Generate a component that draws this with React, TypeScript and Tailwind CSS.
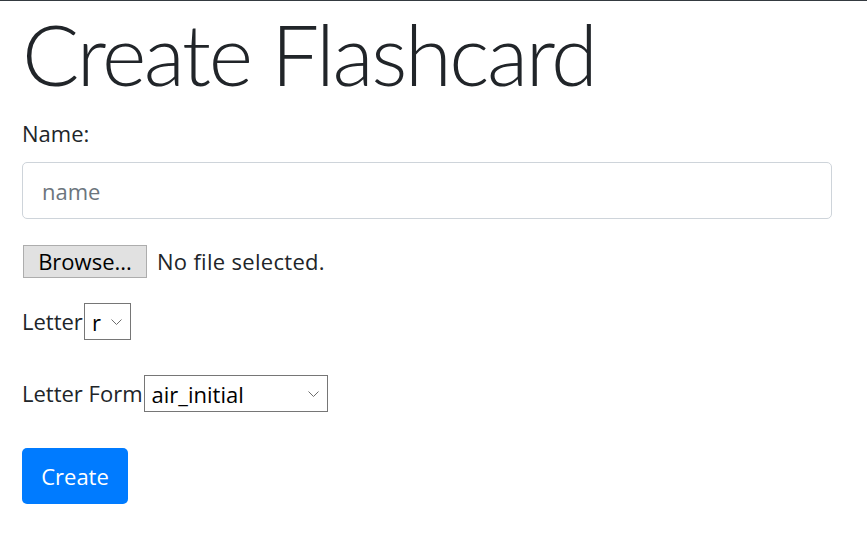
function Chevron() {
  return (
    <svg className="absolute right-[8px] top-1/2 -translate-y-1/2" width="11" height="7" viewBox="0 0 11 7" fill="none">
      <path d="M0.5 1 L5.5 6 L10.5 1" stroke="#6d6d6d" strokeWidth="1" />
    </svg>
  );
}

function FakeSelect({ value, width }: { value: string; width: string }) {
  return (
    <div className={`relative ${width} h-[37px] border border-[#767676] bg-white flex items-center pl-[7px] text-[22px] text-black`}>
      <span className="leading-none">{value}</span>
      <Chevron />
    </div>
  );
}

export default function App() {
  return (
    <div className="min-h-[536px] bg-white border-t border-[#343a40] font-['Open_Sans',sans-serif] text-[#212529]">
      <div className="pl-[22px] w-[832px]">
        <h1 className="font-['Lato',sans-serif] text-[85px] font-light leading-[100px] tracking-[-2.4px] pt-[2px] pb-[15px]">
          Create Flashcard
        </h1>

        <label className="block text-[22px] leading-[30px] mb-[14px]">Name:</label>
        <input
          type="text"
          placeholder="name"
          className="block w-[810px] h-[57px] border border-[#ced4da] rounded-[5px] px-[19px] text-[22px] placeholder:text-[#6c757d] outline-none"
        />

        <div className="flex items-center mt-[26px] text-[22px]">
          <div className="h-[33px] w-[124px] ml-[1px] bg-[#e1e1e1] border border-[#adadad] flex items-center justify-center text-black">
            Browse...
          </div>
          <span className="ml-[10px] tracking-[0.3px]">No file selected.</span>
        </div>

        <div className="flex items-center mt-[25px] text-[22px]">
          <span className="mr-[1px]">Letter</span>
          <FakeSelect value="r" width="w-[47px]" />
        </div>

        <div className="flex items-center mt-[35px] text-[22px]">
          <span className="mr-[1px]">Letter Form</span>
          <FakeSelect value="air_initial" width="w-[184px]" />
        </div>

        <button className="mt-[36px] h-[56px] w-[106px] bg-[#007bff] text-white text-[22px] rounded-[5px] flex items-center justify-center">
          Create
        </button>
      </div>
    </div>
  );
}
